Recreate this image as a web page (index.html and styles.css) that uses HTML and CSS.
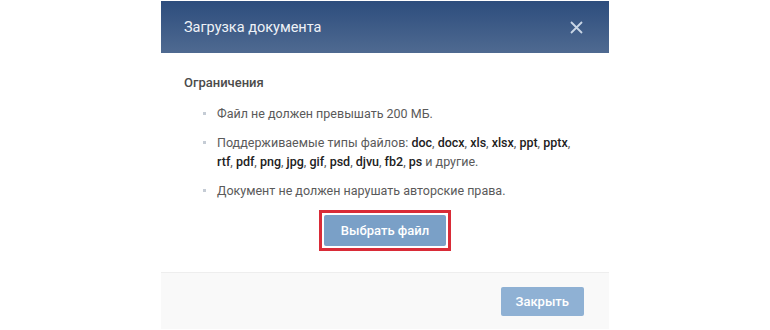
FILE: index.html
```html
<!DOCTYPE html>
<html lang="ru">
<head>
  <meta charset="UTF-8" />
  <title>Загрузка документа</title>
  <link rel="stylesheet" href="styles.css">
</head>
<body>
  <div class="modal">
    <header class="modal-header">
      <span class="modal-title">Загрузка документа</span>
      <span class="modal-close">
        <svg width="13" height="13" viewBox="0 0 13 13"><path d="M1 1L12 12M12 1L1 12" stroke="#c9d6e6" stroke-width="1.8" fill="none"/></svg>
      </span>
    </header>
    <div class="modal-body">
      <h3>Ограничения</h3>
      <ul class="rules">
        <li>Файл не должен превышать 200 МБ.</li>
        <li>Поддерживаемые типы файлов: <b>doc</b>, <b>docx</b>, <b>xls</b>, <b>xlsx</b>, <b>ppt</b>, <b>pptx</b>, <b>rtf</b>, <b>pdf</b>, <b>png</b>, <b>jpg</b>, <b>gif</b>, <b>psd</b>, <b>djvu</b>, <b>fb2</b>, <b>ps</b> и другие.</li>
        <li>Документ не должен нарушать авторские права.</li>
      </ul>
      <div class="pick">
        <div class="highlight">
          <button class="btn">Выбрать файл</button>
        </div>
      </div>
    </div>
    <footer class="modal-footer">
      <button class="btn btn-light">Закрыть</button>
    </footer>
  </div>
</body>
</html>
```

FILE: styles.css
```css
body {
  margin: 0;
  background: #fff;
  font-family: Roboto, "Liberation Sans", sans-serif;
  color: #555;
}

.modal {
  width: 448px;
  margin: 1px auto 0;
  background: #fff;
}

.modal-header {
  height: 52px;
  display: flex;
  align-items: center;
  justify-content: space-between;
  padding: 0 26px 0 23px;
  background: linear-gradient(180deg, #2d4d7d, #4f6a91);
}

.modal-title {
  color: #eef2f7;
  font-size: 14.5px;
}

.modal-close {
  display: flex;
}

.modal-body {
  padding: 22px 23px 21px;
}

.modal-body h3 {
  margin: 0 0 14px;
  font-size: 13px;
  font-weight: 500;
  color: #4b4b4b;
}

.rules {
  margin: 0;
  padding: 0 0 0 33px;
  list-style: none;
  font-size: 12.5px;
  line-height: 19px;
  color: #5a5a5a;
}

.rules li {
  position: relative;
  margin-bottom: 10px;
}

.rules li::before {
  content: "";
  position: absolute;
  left: -14px;
  top: 8px;
  width: 3px;
  height: 3px;
  background: #c5ccd5;
}

.rules b {
  font-weight: 500;
  color: #222;
}

.pick {
  display: flex;
  justify-content: center;
  margin-top: 6px;
}

.highlight {
  border: 3px solid #d92b37;
  padding: 2px;
}

.btn {
  display: block;
  border: none;
  border-radius: 2px;
  background: #7aa0c7;
  color: #fff;
  font-family: Roboto, "Liberation Sans", sans-serif;
  font-size: 13px;
  font-weight: 500;
  height: 31px;
  padding: 0 17px;
}

.modal-footer {
  height: 56px;
  display: flex;
  align-items: center;
  justify-content: flex-end;
  padding: 0 25px;
  background: #f9f9f9;
  border-top: 1px solid #eeeeee;
}

.btn-light {
  background: #8fb1d4;
  height: 29px;
  padding: 0 15px;
}
```
